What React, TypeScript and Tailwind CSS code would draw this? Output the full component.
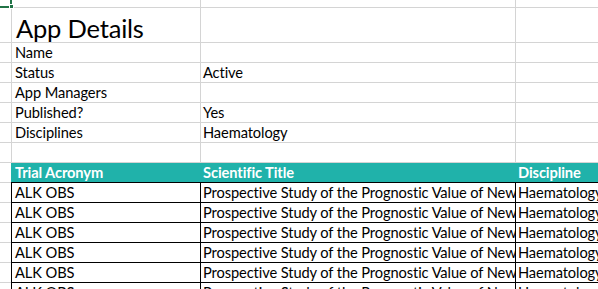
const font = { fontFamily: 'Lato, "Liberation Sans", sans-serif' }

const trials = Array.from({ length: 6 }, () => ({
  acronym: 'ALK OBS',
  title: 'Prospective Study of the Prognostic Value of New Markers in Patients with ALK-positive Lymphoma',
  discipline: 'Haematology',
}))

const details: [string, string][] = [
  ['Name', ''],
  ['Status', 'Active'],
  ['App Managers', ''],
  ['Published?', 'Yes'],
  ['Disciplines', 'Haematology'],
  ['', ''],
]

function Row({ cells, tall = false }: { cells: string[]; tall?: boolean }) {
  const h = tall ? 'h-[35px]' : 'h-[20px]'
  return (
    <div className={`flex ${h} border-b border-[#d4d4d4]`}>
      <div className="w-[12px] shrink-0 border-r border-[#d4d4d4]" />
      <div className="w-[189px] shrink-0 border-r border-[#d4d4d4] pl-[3px] overflow-hidden whitespace-nowrap leading-[19px]">
        {tall ? (
          <span className="block text-[25.5px] leading-[34px] pt-[3px] pl-[1px] tracking-[-0.2px]">{cells[0]}</span>
        ) : (
          cells[0]
        )}
      </div>
      <div className="w-[315px] shrink-0 border-r border-[#d4d4d4] pl-[2px] overflow-hidden whitespace-nowrap leading-[19px]">
        {cells[1]}
      </div>
      <div className="flex-1" />
    </div>
  )
}

function TrialRow({ acronym, title, discipline }: { acronym: string; title: string; discipline: string }) {
  return (
    <div className="flex h-[20px]">
      <div className="w-[11px] shrink-0 border-b border-[#d4d4d4]" />
      <div className="w-[190px] shrink-0 border-x border-b border-black pl-[3px] overflow-hidden whitespace-nowrap leading-[19px]">
        {acronym}
      </div>
      <div className="w-[315px] shrink-0 border-r border-b border-black pl-[2px] overflow-hidden whitespace-nowrap leading-[19px]">
        {title}
      </div>
      <div className="w-[82px] shrink-0 border-b border-black pl-[2px] overflow-hidden whitespace-nowrap leading-[19px]">
        {discipline}
      </div>
    </div>
  )
}

export default function App() {
  return (
    <div
      className="relative w-[598px] h-[289px] overflow-hidden bg-white text-black text-[14.67px] tracking-[-0.1px]"
      style={font}
    >
      {/* selected cell corner */}
      <div className="absolute left-0 top-[6px] w-[11px] h-[2px] bg-[#217346]" />
      <div className="absolute left-[10px] top-0 w-[2px] h-[5px] bg-[#217346]" />
      <div className="absolute left-[9px] top-[4px] w-[5px] h-[5px] bg-[#217346] border border-white" />

      <div className="flex h-[8px] border-b border-[#d4d4d4]">
        <div className="w-[12px] shrink-0 border-r border-[#d4d4d4]" />
        <div className="w-[189px] shrink-0 border-r border-[#d4d4d4]" />
        <div className="w-[315px] shrink-0 border-r border-[#d4d4d4]" />
      </div>
      <Row cells={['App Details', '']} tall />
      {details.map(([k, v], i) => (
        <Row key={i} cells={[k, v]} />
      ))}

      <div className="flex h-[20px]">
        <div className="w-[11px] shrink-0 border-b border-[#d4d4d4]" />
        <div className="flex-1 flex bg-[#20b2aa] text-white font-bold border-b border-black leading-[19px] whitespace-nowrap">
          <div className="w-[190px] shrink-0 pl-[4px]">Trial Acronym</div>
          <div className="w-[315px] shrink-0 pl-[2px]">Scientific Title</div>
          <div className="flex-1 pl-[2px]">Discipline</div>
        </div>
      </div>
      {trials.map((t, i) => (
        <TrialRow key={i} {...t} />
      ))}
    </div>
  )
}
